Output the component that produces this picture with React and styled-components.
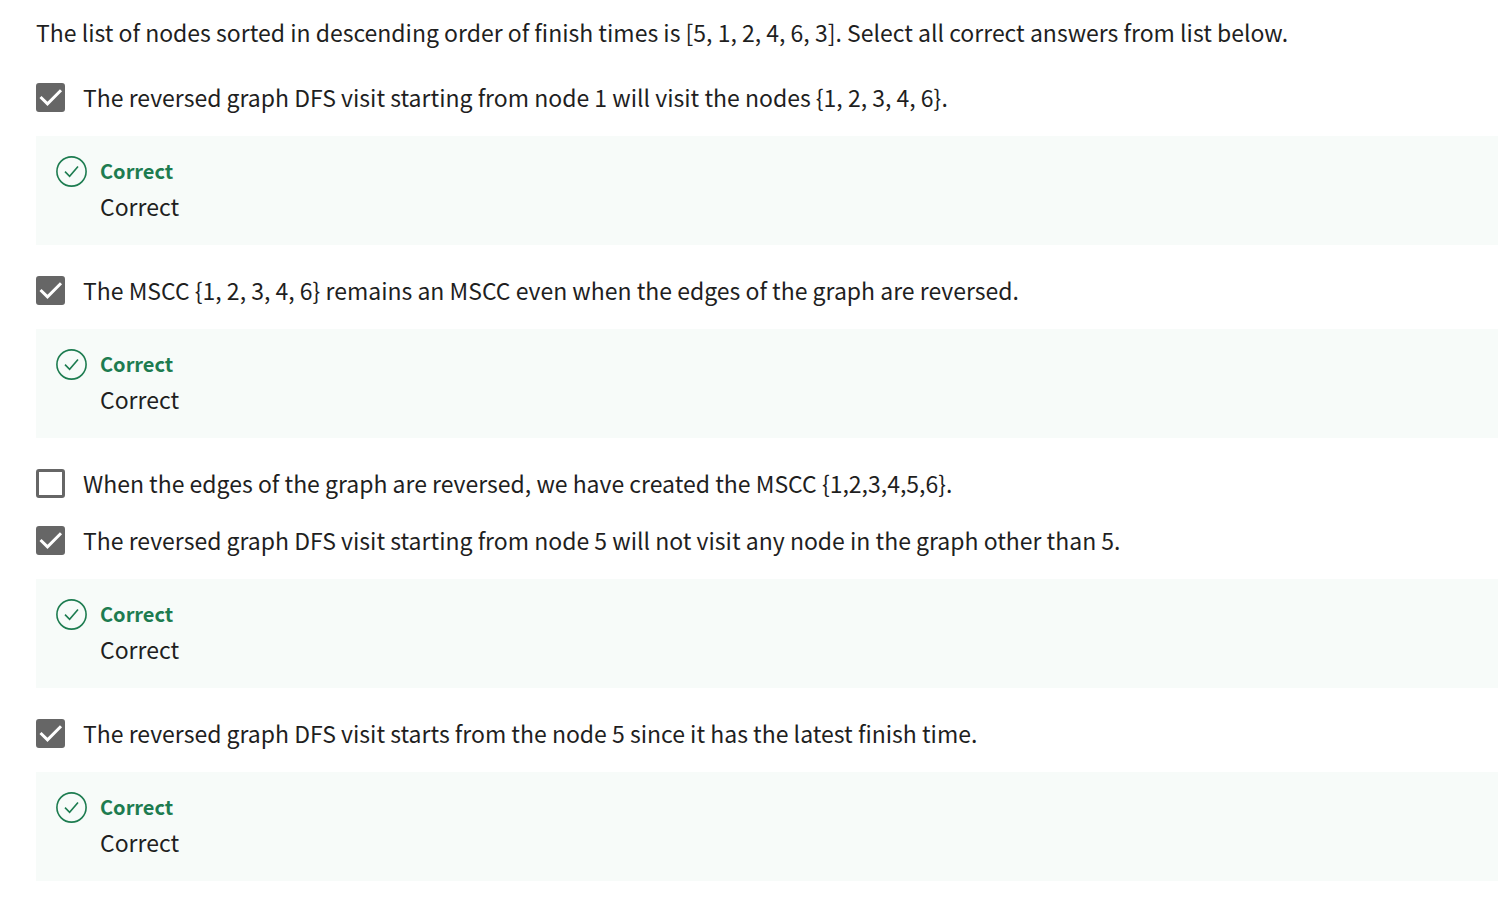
import React from "react";
import styled, { createGlobalStyle } from "styled-components";

const GlobalStyle = createGlobalStyle`
  * { box-sizing: border-box; }
  body {
    margin: 0;
    background: #fff;
    color: #1f1f1f;
    font-family: "Noto Sans CJK SC", "Open Sans", sans-serif;
    font-size: 23px;
    line-height: 36px;
  }
`;

const Question = styled.form`
  padding: 14px 0 36px 36px;
`;

const Prompt = styled.p`
  margin: 0 0 29px;
`;

const Answer = styled.div`
  margin-bottom: ${(p) => (p.$feedback ? 27 : 21)}px;
`;

const Option = styled.label`
  display: flex;
  align-items: center;
  gap: 18px;
`;

const BoxWrap = styled.span`
  display: grid;
  flex: none;
  width: 29px;
  height: 29px;

  & > * { grid-area: 1 / 1; }
`;

const Box = styled.input`
  appearance: none;
  width: 29px;
  height: 29px;
  margin: 0;
  border: 3px solid #666;
  border-radius: 3px;
  background: #fff;

  &:checked { background: #666; }
`;

const Tick = styled.svg`
  width: 29px;
  height: 29px;
  pointer-events: none;
`;

const Feedback = styled.section`
  display: flex;
  gap: 13px;
  margin-top: 21px;
  padding: 18px 20px 21px;
  background: #f7fbf9;
`;

const StatusIcon = styled.svg`
  flex: none;
  width: 31px;
  height: 31px;
  margin-top: 2px;
`;

const Verdict = styled.h2`
  margin: 0;
  color: #1d7c50;
  font-size: 20px;
  line-height: 34px;
  font-weight: 700;
`;

const Note = styled.p`
  margin: 0;
`;

const answers = [
  { text: "The reversed graph DFS visit starting from node 1 will visit the nodes {1, 2, 3, 4, 6}.", checked: true },
  { text: "The MSCC {1, 2, 3, 4, 6} remains an MSCC even when the edges of the graph are reversed.", checked: true },
  { text: "When the edges of the graph are reversed, we have created the MSCC {1,2,3,4,5,6}.", checked: false },
  { text: "The reversed graph DFS visit starting from node 5 will not visit any node in the graph other than 5.", checked: true },
  { text: "The reversed graph DFS visit starts from the node 5 since it has the latest finish time.", checked: true },
];

export default function App() {
  return (
    <>
      <GlobalStyle />
      <Question>
        <Prompt>
          The list of nodes sorted in descending order of finish times is [5, 1, 2, 4, 6, 3]. Select all correct answers from list below.
        </Prompt>
        {answers.map(({ text, checked }) => (
          <Answer key={text} $feedback={checked}>
            <Option>
              <BoxWrap>
                <Box type="checkbox" defaultChecked={checked} />
                {checked && (
                  <Tick viewBox="0 0 29 29" fill="none" stroke="#fff" strokeWidth="3" aria-hidden="true">
                    <path d="M4.5 14 11.5 20.8 25 7.3" />
                  </Tick>
                )}
              </BoxWrap>
              <span>{text}</span>
            </Option>
            {checked && (
              <Feedback>
                <StatusIcon viewBox="0 0 31 31" fill="none" stroke="#1d7c50" strokeWidth="1.6" aria-hidden="true">
                  <circle cx="15.5" cy="15.5" r="14.6" />
                  <path d="M9 15.6 13.6 20.3 22 10.5" />
                </StatusIcon>
                <div>
                  <Verdict>Correct</Verdict>
                  <Note>Correct</Note>
                </div>
              </Feedback>
            )}
          </Answer>
        ))}
      </Question>
    </>
  );
}
